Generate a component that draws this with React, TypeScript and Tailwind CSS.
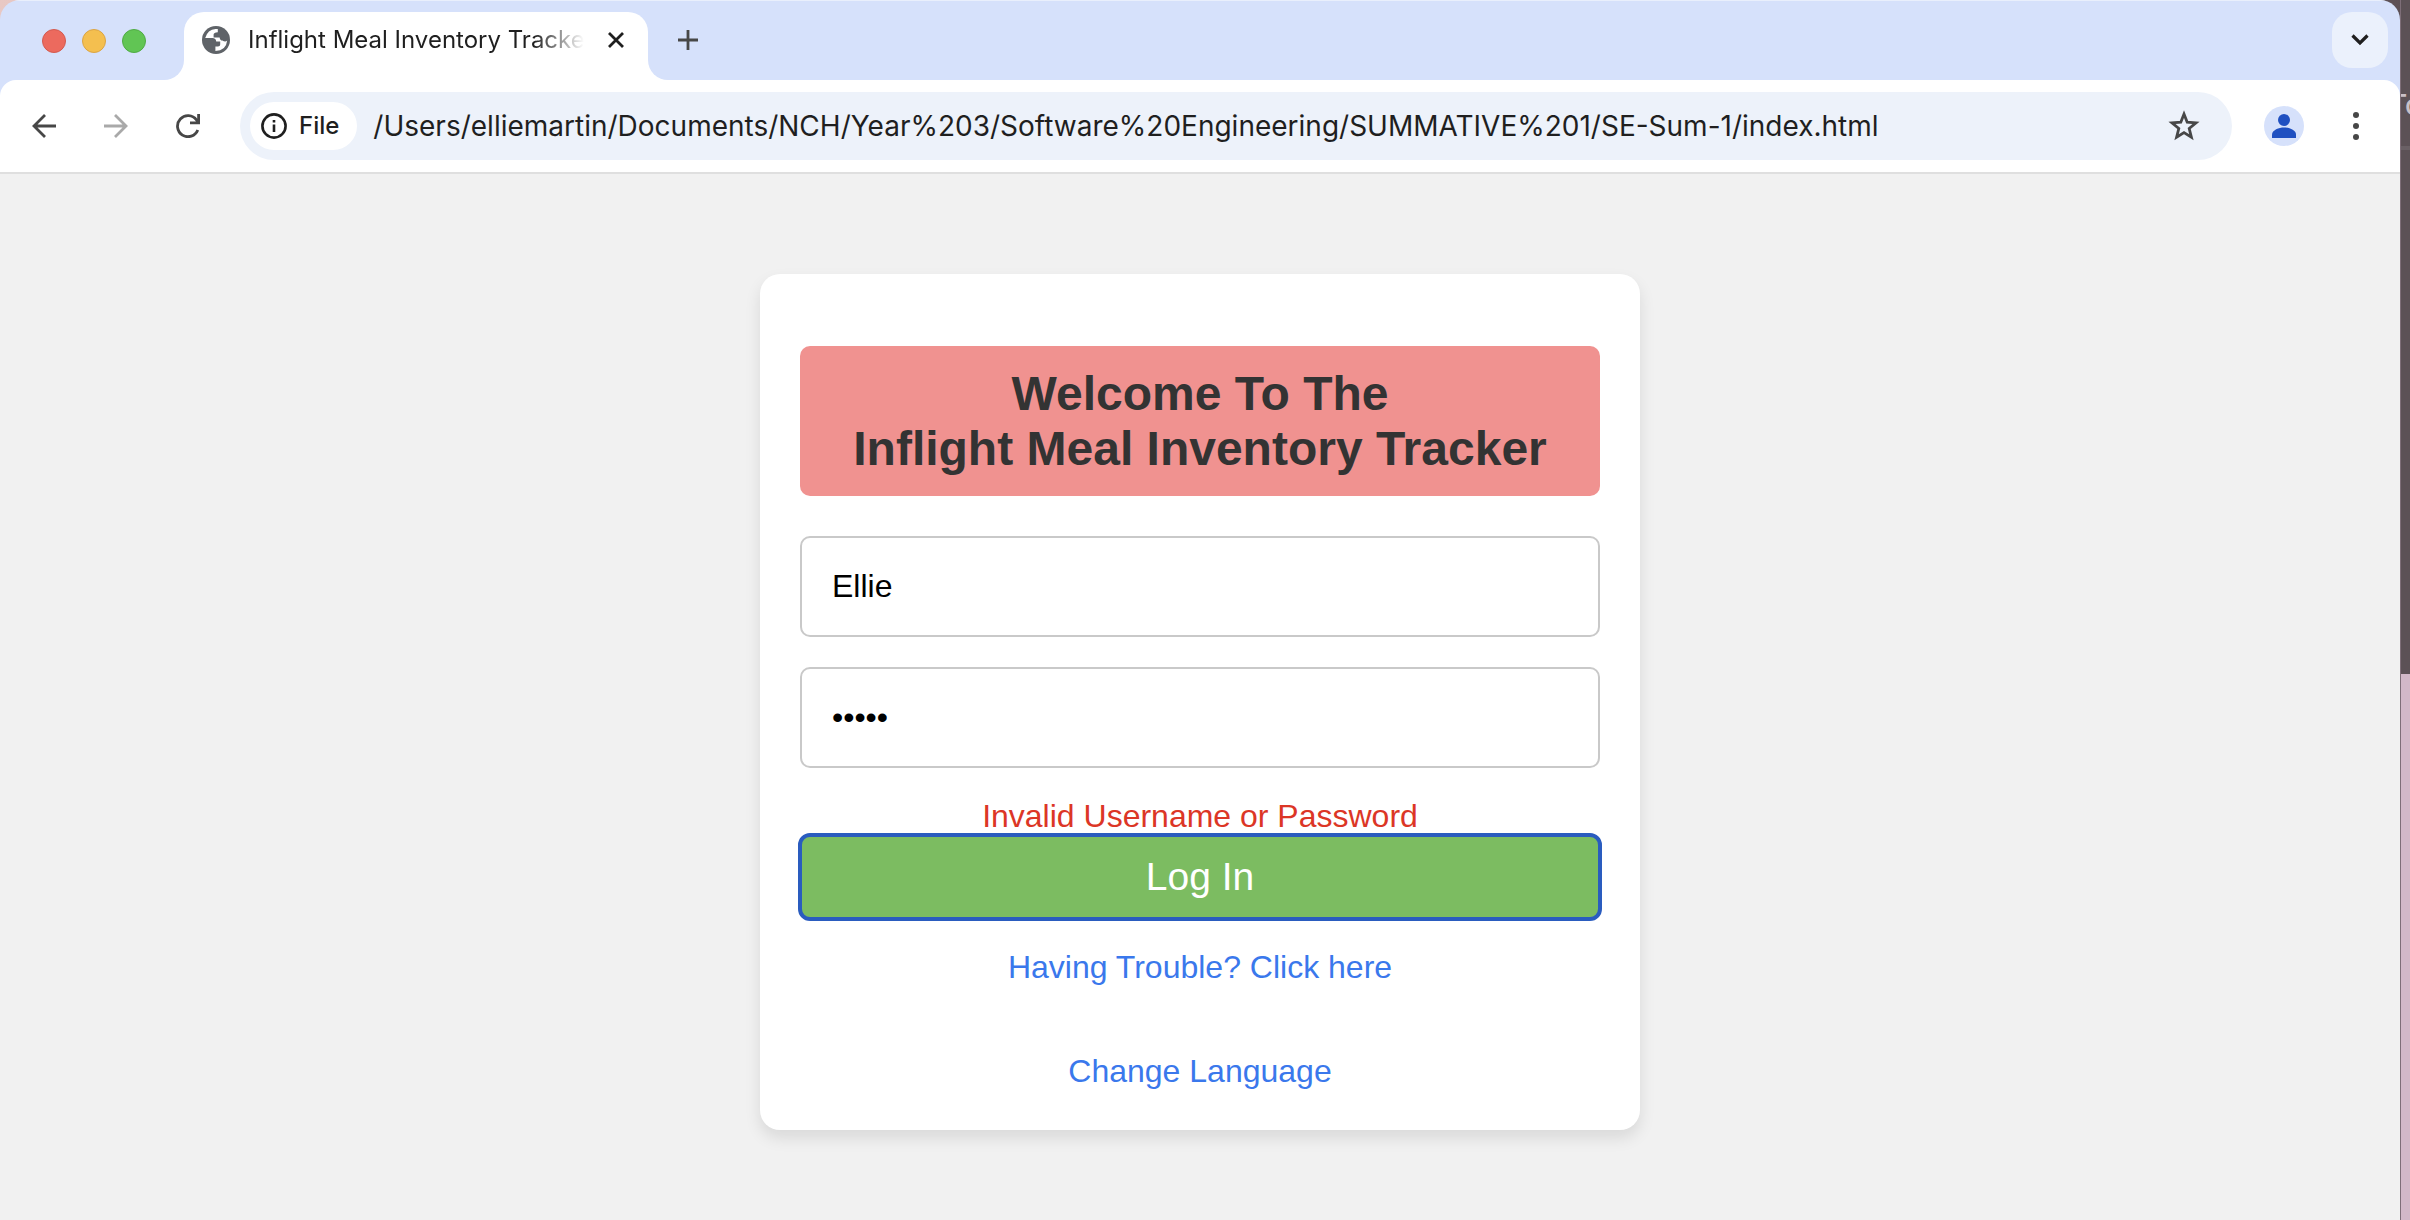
import { useState } from "react";

const URL_TEXT =
  "/Users/elliemartin/Documents/NCH/Year%203/Software%20Engineering/SUMMATIVE%201/SE-Sum-1/index.html";

function Globe() {
  return (
    <svg viewBox="0 0 28 28" className="size-7 shrink-0" aria-hidden="true">
      <circle cx="14" cy="14" r="14" fill="#5f6368" />
      <path
        d="M15.8 3.1 Q14.8 3 13.6 3 Q5.6 3.6 3.2 12 H10.4 Q14 12 14.2 15.6 H18.2 V18.6 Q18.2 20.6 16 20.6 H13.4 V25 Q24 25 25.2 14.6 Q23.4 16.6 20.4 14.6 Q18 14.4 17.6 11.4 H11.6 V8.6 Q11.6 6.4 15.8 6.2 Z"
        fill="#fff"
      />
    </svg>
  );
}

function TabStrip() {
  return (
    <header className="flex h-20 items-end bg-[#d6e1fb] border-t border-[#e9effc]">
      <div className="flex h-full flex-1 items-end">
        <div className="flex h-full w-46 shrink-0 flex-col">
          <div className="flex flex-1 items-start gap-4 pl-[42px] pt-7">
            <button aria-label="Close window" className="size-6 rounded-full border border-[#d35a4f] bg-[#ec6a5e]" />
            <button aria-label="Minimise window" className="size-6 rounded-full border border-[#dba444] bg-[#f4bf4f]" />
            <button aria-label="Zoom window" className="size-6 rounded-full border border-[#50ab44] bg-[#61c554]" />
          </div>
          <div className="flex h-5 justify-end bg-white">
            <div className="h-full w-full rounded-br-[20px] bg-[#d6e1fb]" />
          </div>
        </div>
        <div className="flex h-[68px] w-[464px] items-center rounded-t-[20px] bg-white pb-3 pl-[18px] pr-4">
          <Globe />
          <div className="ml-[18px] flex-1 overflow-hidden whitespace-nowrap text-2xl text-[#1f1f1f] mask-r-from-85% mask-r-to-100%">
            Inflight Meal Inventory Tracker
          </div>
          <button aria-label="Close tab" className="ml-4 flex size-8 items-center justify-center">
            <svg viewBox="0 0 16 16" className="size-4" stroke="#1f1f1f" strokeWidth="2.8" aria-hidden="true">
              <path d="M1 1 15 15M15 1 1 15" />
            </svg>
          </button>
        </div>
        <div className="h-5 w-5 bg-white">
          <div className="size-full rounded-bl-[20px] bg-[#d6e1fb]" />
        </div>
        <button aria-label="New tab" className="flex h-20 w-10 items-center justify-center">
          <svg viewBox="0 0 20 20" className="size-5" stroke="#474747" strokeWidth="2.8" aria-hidden="true">
            <path d="M10 0V20M0 10H20" />
          </svg>
        </button>
      </div>
      <button aria-label="Search tabs" className="mr-3 mb-3 flex size-14 items-center justify-center rounded-[20px] bg-[#ebf1fc]">
        <svg viewBox="0 0 18 12" className="h-3 w-[18px]" fill="none" stroke="#1f1f1f" strokeWidth="3.2" aria-hidden="true">
          <path d="M1.5 1.5 9 9 16.5 1.5" />
        </svg>
      </button>
    </header>
  );
}

function Toolbar() {
  const [url, setUrl] = useState(URL_TEXT);
  return (
    <div className="bg-[#d6e1fb]">
      <nav className="flex h-[94px] items-center rounded-t-2xl border-b-2 border-[#dfdfdf] bg-white pl-8 pr-10 text-[#474747]">
        <button aria-label="Back">
          <svg viewBox="0 0 24 24" className="size-6" fill="none" stroke="currentColor" strokeWidth="2.8" aria-hidden="true">
            <path d="M24 12H2M13 1 2 12 13 23" />
          </svg>
        </button>
        <button aria-label="Forward" className="ml-12 text-[#a9a9a9]">
          <svg viewBox="0 0 24 24" className="size-6" fill="none" stroke="currentColor" strokeWidth="2.8" aria-hidden="true">
            <path d="M0 12H22M11 1 22 12 11 23" />
          </svg>
        </button>
        <button aria-label="Reload" className="ml-12">
          <svg viewBox="0 0 24 24" className="size-6" fill="none" stroke="currentColor" strokeWidth="2.8" aria-hidden="true">
            <path d="M21.8 16A10.5 10.5 0 1 1 20.5 6L22.5 8.6M22.6 0V8.8H14" />
          </svg>
        </button>
        <div className="ml-10 flex h-[68px] flex-1 items-center rounded-full bg-[#edf2fa] pl-[10px] pr-8">
          <button className="flex h-12 items-center gap-3 rounded-full bg-white pl-[11px] pr-[18px] text-2xl font-medium text-[#1f1f1f]">
            <svg viewBox="0 0 26 26" className="size-[26px]" fill="none" stroke="currentColor" strokeWidth="2.6" aria-hidden="true">
              <circle cx="13" cy="13" r="11.6" />
              <path d="M13 11.5V19M13 7V9.6" />
            </svg>
            File
          </button>
          <input
            aria-label="Address"
            value={url}
            onChange={(e) => setUrl(e.target.value)}
            className="ml-4 min-w-0 flex-1 bg-transparent text-[28px] text-[#1f1f1f] outline-none"
          />
          <button aria-label="Bookmark this page">
            <svg viewBox="0 0 32 32" className="size-8" fill="none" stroke="currentColor" strokeWidth="2.8" aria-hidden="true">
              <path d="M16 4 19.2 12.2 28 12.9 21.2 18.5 23.4 27.2 16 22.6 8.6 27.2 10.8 18.5 4 12.9 12.8 12.2Z" />
            </svg>
          </button>
        </div>
        <button aria-label="Profile" className="ml-8 flex size-10 items-center justify-center rounded-full bg-[#d6e1fb] text-[#1f50c1]">
          <svg viewBox="0 0 24 24" className="size-6" fill="currentColor" aria-hidden="true">
            <circle cx="12" cy="6" r="6" />
            <path d="M0 24V20.5C0 16 7 13.4 12 13.4S24 16 24 20.5V24Z" />
          </svg>
        </button>
        <button aria-label="Menu" className="ml-12">
          <svg viewBox="0 0 8 28" className="h-7 w-2" fill="currentColor" aria-hidden="true">
            <circle cx="4" cy="3" r="3" />
            <circle cx="4" cy="14" r="3" />
            <circle cx="4" cy="25" r="3" />
          </svg>
        </button>
      </nav>
    </div>
  );
}

function LoginPage() {
  const [user, setUser] = useState("Ellie");
  const [password, setPassword] = useState("ellie");
  const field =
    "block h-[101px] w-full rounded-[10px] border-2 border-[#c9c9c9] bg-white px-[30px] text-[32px] text-black outline-none";
  return (
    <main className="flex flex-1 flex-col items-center bg-[#f1f1f1] px-10 pt-[100px] pb-[90px] font-['Liberation_Sans',Arial,sans-serif]">
      <form
        onSubmit={(e) => e.preventDefault()}
        className="flex w-full max-w-[880px] flex-col rounded-[20px] bg-white px-10 pt-[72px] pb-[41px] text-center text-[32px] leading-9 shadow-[0_8px_16px_rgba(0,0,0,0.1)]"
      >
        <h1 className="mb-10 rounded-[10px] bg-[#f09290] py-5 text-5xl leading-[55px] font-bold text-[#333]">
          Welcome To The
          <br />
          Inflight Meal Inventory Tracker
        </h1>
        <div className="flex flex-col gap-[30px]">
          <input aria-label="Username" value={user} onChange={(e) => setUser(e.target.value)} className={field} />
          <input aria-label="Password" type="password" value={password} onChange={(e) => setPassword(e.target.value)} className={field} />
        </div>
        <p role="alert" className="mt-[30px] text-[#dc3626]">Invalid Username or Password</p>
        <button className="mt-px h-[84px] rounded-[10px] bg-[#7cbc61] text-[39px] text-white outline-4 -outline-offset-2 outline-[#2a5cbf]">
          Log In
        </button>
        <a href="#help" className="mt-[30px] self-center text-[#3a78ec]">Having Trouble? Click here</a>
        <a href="#language" className="mt-[68px] self-center text-[#3a78ec]">Change Language</a>
      </form>
    </main>
  );
}

export default function App() {
  return (
    <div className="flex min-h-screen bg-linear-to-r from-[#e8c8c4] to-[#5c5055] font-[Inter,sans-serif]">
      <div className="flex min-w-0 flex-1 flex-col overflow-hidden rounded-t-[20px]">
        <TabStrip />
        <Toolbar />
        <LoginPage />
      </div>
      <aside className="flex w-[10px] shrink-0 flex-col overflow-hidden border-l border-black/40 bg-[#d2b8c8]">
        <div className="h-[674px] bg-[#5c5156] pt-[89px]">
          <div className="-ml-3 text-[28px] leading-8 font-medium text-[#c9c0c8]">To</div>
          <div className="mt-[25px] h-1 bg-[#6a6065]" />
        </div>
      </aside>
    </div>
  );
}
